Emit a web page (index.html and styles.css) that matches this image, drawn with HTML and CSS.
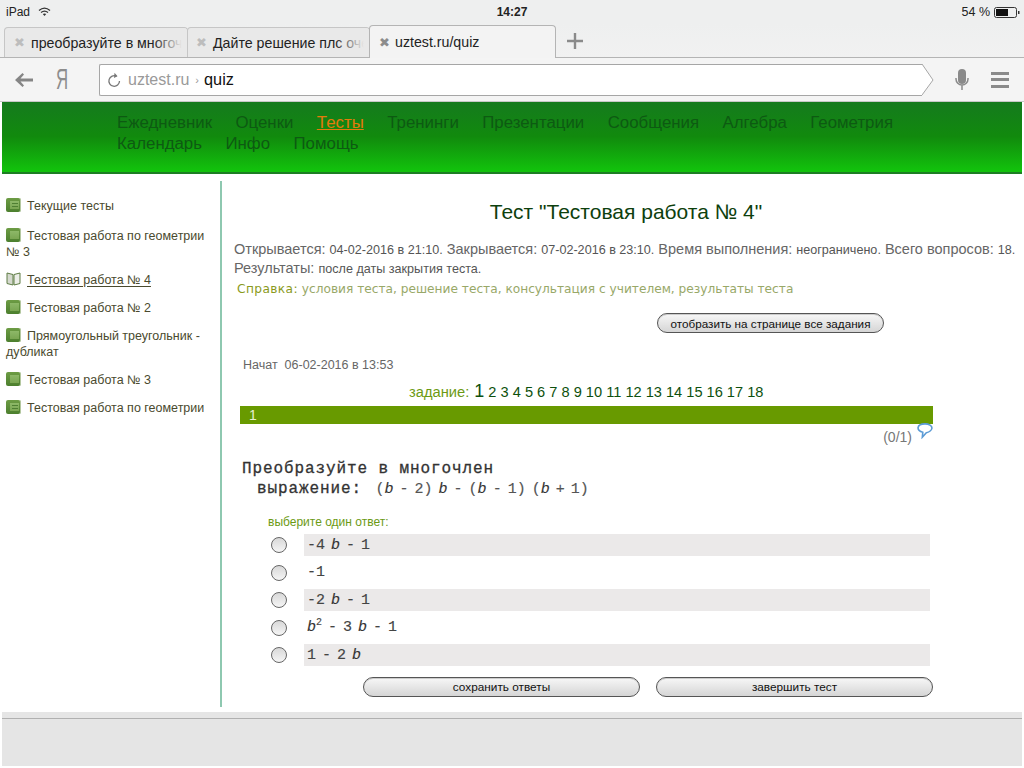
FILE: index.html
```html
<!DOCTYPE html>
<html lang="ru">
<head>
<meta charset="utf-8">
<title>uztest.ru/quiz</title>
<link rel="stylesheet" href="styles.css">
</head>
<body>
<div class="status">
  <div class="status-left">iPad
    <svg class="wifi" width="13" height="10" viewBox="0 0 13 10"><path d="M1 3.500C4.500 .5 8.500 .5 12 3.500" fill="none" stroke="#333" stroke-width="1.300"/><path d="M3 5.500C5 3.900 8 3.900 10 5.500" fill="none" stroke="#333" stroke-width="1.300"/><path d="M4.800 7L6.500 9 8.200 7C7.200 6.300 5.800 6.300 4.800 7Z" fill="#333"/></svg>
  </div>
  <div class="status-time">14:27</div>
  <div class="status-right">54 %
    <svg width="26" height="11" viewBox="0 0 26 11"><rect x=".5" y=".5" width="22" height="10" rx="2" fill="none" stroke="#333"/><rect x="2" y="2" width="12" height="7" fill="#111"/><rect x="24" y="4" width="1.500" height="3" fill="#333"/></svg>
  </div>
</div>
<div class="tabs">
  <div class="tab"><span class="x">✖</span><span class="tab-text">преобразуйте в многоч</span></div>
  <div class="tab tab-2"><span class="x">✖</span><span class="tab-text">Дайте решение плс оче</span></div>
  <div class="tab tab-active"><span class="x">✖</span><span class="tab-text">uztest.ru/quiz</span></div>
  <svg class="plus" width="16" height="16" viewBox="0 0 16 16"><path d="M8 0V16M0 8H16" stroke="#8a8a8a" stroke-width="2.400"/></svg>
</div>
<div class="toolbar">
  <svg class="back" width="18" height="14" viewBox="0 0 18 14"><path d="M7.500 0L9 1.500 5.500 5.500H18V8.500H5.500L9 12.500 7.500 14 0 7Z" fill="#858585"/></svg>
  <span class="ya">Я</span>
  <div class="address">
    <svg class="reload" width="14" height="16" viewBox="0 0 14 16"><path d="M9.500 4.200A5.300 5.300 0 1 0 12.500 9" fill="none" stroke="#777" stroke-width="1.300"/><path d="M7.500 .8L10.500 4.200 7 6Z" fill="#777"/></svg>
    <span class="host">uztest.ru</span><span class="sep">›</span><span class="path">quiz</span>
    <svg class="addr-tip" width="12" height="32" viewBox="0 0 12 32"><path d="M0 0L11 16 0 31" fill="#fff" stroke="#a6a6a6"/></svg>
  </div>
  <svg class="mic" width="14" height="22" viewBox="0 0 14 22"><rect x="3" y="0" width="8" height="15" rx="4" fill="#8a8a8a"/><path d="M1 9V10A6 6 0 0 0 13 10V9M7 16V21" fill="none" stroke="#8a8a8a" stroke-width="1.500"/></svg>
  <div class="menu"><i></i><i></i><i></i></div>
</div>
<div class="page">
  <nav class="nav">
    <a>Ежедневник</a><a>Оценки</a><a class="on">Тесты</a><a>Тренинги</a><a>Презентации</a><a>Сообщения</a><a>Алгебра</a><a>Геометрия</a><a>Календарь</a><a>Инфо</a><a>Помощь</a>
  </nav>
  <div class="main">
    <aside class="side">
      <div class="item item-first"><span class="book book-lined"></span>Текущие тесты</div>
      <div class="item"><span class="book"></span>Тестовая работа по геометрии № 3</div>
      <div class="item"><svg class="open" width="15" height="14" viewBox="0 0 15 14"><path d="M1 1L7 2.500 7 13 1 11.500Z" fill="#d5d9cf" stroke="#5f7d45"/><path d="M14 1L8 2.500 8 13 14 11.500Z" fill="#eceee8" stroke="#5f7d45"/></svg><u>Тестовая работа № 4</u></div>
      <div class="item"><span class="book"></span>Тестовая работа № 2</div>
      <div class="item"><span class="book"></span>Прямоугольный треугольник - дубликат</div>
      <div class="item"><span class="book"></span>Тестовая работа № 3</div>
      <div class="item"><span class="book book-lined"></span>Тестовая работа по геометрии</div>
    </aside>
    <section class="content">
      <h1 class="title">Тест "Тестовая работа № 4"</h1>
      <p class="info">Открывается: <small>04-02-2016 в 21:10.</small> Закрывается: <small>07-02-2016 в 23:10.</small> Время выполнения: <small>неограничено.</small> Всего вопросов: <small>18.</small><br>Результаты: <small>после даты закрытия теста.</small></p>
      <p class="help"><b>Справка:</b> условия теста, решение теста, консультация с учителем, результаты теста</p>
      <div class="show-row"><button class="btn show">отобразить на странице все задания</button></div>
      <p class="started">Начат&nbsp; 06-02-2016 в 13:53</p>
      <div class="pager"><span class="pager-label">задание:</span> <b>1</b> <a>2</a> <a>3</a> <a>4</a> <a>5</a> <a>6</a> <a>7</a> <a>8</a> <a>9</a> <a>10</a> <a>11</a> <a>12</a> <a>13</a> <a>14</a> <a>15</a> <a>16</a> <a>17</a> <a>18</a></div>
      <div class="bar">1</div>
      <div class="score">(0/1)
        <svg class="bubble" width="16" height="17" viewBox="0 0 18 18"><path d="M9 1.500C13.500 1.500 17 3.500 16.800 6.500 16.500 9 13 11 10.500 11.500L6 16.500 6.500 11C3 10 1 8 1.200 5.800 1.500 3 5 1.500 9 1.500Z" fill="#fff" stroke="#5b9bd5" stroke-width="1.800"/></svg>
      </div>
      <div class="question">Преобразуйте в многочлен<br><span class="q2">выражение: <span class="expr">(<i>b</i> - 2) <i>b</i> - (<i>b</i> - 1) (<i>b</i> + 1)</span></span></div>
      <div class="choose">выберите один ответ:</div>
      <div class="answers">
        <div class="answer"><span class="radio"></span><div class="opt shade">-4 <i>b</i> - 1</div></div>
        <div class="answer"><span class="radio"></span><div class="opt">-1</div></div>
        <div class="answer"><span class="radio"></span><div class="opt shade">-2 <i>b</i> - 1</div></div>
        <div class="answer"><span class="radio"></span><div class="opt"><i>b</i><sup>2</sup> - 3 <i>b</i> - 1</div></div>
        <div class="answer"><span class="radio"></span><div class="opt shade">1 - 2 <i>b</i></div></div>
      </div>
      <div class="actions"><button class="btn wide">сохранить ответы</button><button class="btn wide">завершить тест</button></div>
    </section>
  </div>
  <div class="foot"></div>
</div>
</body>
</html>
```
FILE: styles.css
```css
* { box-sizing: border-box; }
html, body { margin: 0; padding: 0; }
body { width: 1024px; height: 768px; overflow: hidden; background: #fff; font-family: "Liberation Sans", Arial, sans-serif; color: #333; }

.status { height: 24px; background: #eeefef; display: grid; grid-template-columns: 1fr auto 1fr; align-items: center; padding: 0 4px 0 6px; font-size: 12px; color: #222; }
.status-left { display: flex; align-items: center; gap: 8px; }
.status-time { font-size: 12px; font-weight: bold; margin-left: -2px; }
.status-right { display: flex; justify-content: flex-end; align-items: center; gap: 4px; font-size: 12.500px; }

.tabs { height: 34px; display: flex; align-items: flex-end; background: linear-gradient(#eeefef, #f1f1f1); border-bottom: 1px solid #b4b4b4; padding-left: 4px; position: relative; }
.tab { width: 184px; height: 30px; background: #e9e9e9; border: 1px solid #c6c6c6; border-bottom: 0; border-radius: 4px 4px 0 0; display: flex; align-items: center; padding-left: 9px; font-size: 14.200px; color: #222; overflow: hidden; white-space: nowrap; position: relative; }
.tab-2 { width: 183px; margin-left: -1px; padding-left: 8px; }
.tab-active { width: 187px; height: 33px; background: #f3f3f3; border-color: #b4b4b4; margin: 0 0 -1px -1px; padding-left: 9px; z-index: 1; }
.x { font-size: 12.500px; color: #bdbdbd; width: 17px; flex: none; }
.tab-active .x { color: #8c8c8c; width: 16px; }
.tab:not(.tab-active)::after { content: ""; position: absolute; right: 0; top: 0; bottom: 0; width: 34px; background: linear-gradient(to right, rgba(233,233,233,0), #e9e9e9 85%); }
.plus { margin: 0 0 8px 11px; }

.toolbar { height: 44px; background: #f4f4f4; border-bottom: 1px solid #c8c8c8; display: flex; align-items: center; padding-left: 15px; }
.back { flex: none; }
.ya { display: block; width: 11px; margin-left: 23px; font-size: 29px; color: #8d8d8d; line-height: 1; flex: none; transform: scaleX(.58); transform-origin: left center; }
.address { position: relative; width: 823px; height: 32px; margin-left: 32px; background: #fff; border: 1px solid #a6a6a6; border-right: 0; border-radius: 2px 0 0 2px; display: flex; align-items: center; padding-left: 7px; font-size: 16px; color: #9a9a9a; }
.reload { margin-right: 7px; flex: none; }
.sep { font-size: 11px; margin: 0 5px 0 6px; }
.path { color: #111; font-size: 16.300px; }
.addr-tip { position: absolute; left: 100%; top: -1px; }
.mic { margin-left: 33px; flex: none; }
.menu { margin-left: 22px; width: 18px; display: flex; flex-direction: column; gap: 3.500px; flex: none; }
.menu i { display: block; height: 3px; background: #8a8a8a; }

.page { padding: 0 2px; }
.nav { height: 72px; background: linear-gradient(#157a1e 0, #118a0d 48%, #12c40c 97%, #1e7e24 97%); padding: 10px 100px 0 115px; display: flex; flex-wrap: wrap; align-content: flex-start; font-size: 16.850px; line-height: 21px; column-gap: 23.400px; color: #0b5a12; }
.nav a { color: #0d5a12; }
.nav .on { color: #e47a0c; text-decoration: underline; }

.main { display: flex; margin-top: 7px; height: 526px; }
.side { margin-left: -2px; border-right: 2px solid #8ec8b0; padding: 17px 6px 0 6px; font-size: 12.500px; line-height: 16px; color: #4a4a2e; flex: none; width: 222px; }
.item { margin-bottom: 12px; }
.item-first { margin-bottom: 14px; }
.book { display: inline-block; width: 15px; height: 14px; margin-right: 6px; vertical-align: -2px; border-radius: 2px; background: linear-gradient(#8db868, #7aa652) 4px 3px / 9px 8px no-repeat, linear-gradient(#6d9c44, #4c7f2e); box-shadow: inset -1px 0 #b5c8a0; }
.book-lined { background: linear-gradient(#4f7f33, #4f7f33) 6px 5px / 6px 1px no-repeat, linear-gradient(#4f7f33, #4f7f33) 6px 8px / 6px 1px no-repeat, linear-gradient(#8db868, #7aa652) 4px 3px / 9px 8px no-repeat, linear-gradient(#6d9c44, #4c7f2e); }
.open { margin-right: 6px; vertical-align: -2px; }
.item u { text-underline-offset: 2px; }

.content { width: 800px; padding: 0 0 0 12px; position: relative; }
.title { margin: 18px 0 0; text-align: center; font-size: 21px; line-height: 25px; font-weight: normal; color: #0d400d; padding-right: 4px; height: 25px; }
.info { margin: 16px 0 0; font-size: 14.500px; line-height: 18px; color: #666; white-space: nowrap; }
.info small { font-size: 12.600px; color: #555; }
.help { margin: 2px 0 0 3px; font-family: "DejaVu Sans", sans-serif; font-size: 12.180px; line-height: 18px; color: #98a868; white-space: nowrap; }
.help b { font-weight: normal; color: #8a9a1c; letter-spacing: .4px; }
.show-row { padding-left: 423px; margin-top: 15px; height: 20px; display: flex; }
.btn { height: 20px; padding: 0; border: 1px solid #555; border-radius: 10px; background: linear-gradient(#f7f7f7, #d5d5d5); box-shadow: inset 0 1px #ccc; font-family: "Liberation Sans", Arial, sans-serif; font-size: 11.800px; color: #111; }
.show { width: 227px; font-size: 11.700px; }
.started { margin: 24px 0 0 9px; font-size: 12.500px; line-height: 16px; color: #666; }
.pager { margin-top: 8px; padding-left: 175px; font-size: 14.600px; line-height: 20px; color: #0d500d; height: 20px; white-space: nowrap; }
.pager-label { color: #6c9a14; font-size: 14.700px; margin-right: 1px; }
.pager b { font-weight: normal; font-size: 18px; }
.bar { margin: 5px 0 0 6px; width: 693px; height: 18px; background: #689a00; color: #e8f0d0; font-size: 14px; line-height: 18px; padding-left: 9px; }
.score { width: 699px; height: 22px; font-size: 14px; color: #777; display: flex; justify-content: flex-end; align-items: flex-start; padding-top: 4px; line-height: 18px; position: relative; }
.bubble { margin: -6px 0 0 5px; }
.question { margin: 13px 0 0 8px; font-family: "Liberation Mono", monospace; font-size: 16px; letter-spacing: .9px; line-height: 20px; color: #333; height: 40px; white-space: nowrap; -webkit-text-stroke: .3px #333; }
.q2 { padding-left: 15px; }
.expr { margin-left: 3px; font-size: 15px; letter-spacing: 0; word-spacing: -3px; color: #555; -webkit-text-stroke: .15px #555; }
.question i, .opt i { font-style: italic; color: #333; }
.choose { margin: 16px 0 0 34px; font-size: 12px; line-height: 14px; color: #6c9a14; height: 14px; }
.answers { margin-top: 2px; }
.answer { display: flex; align-items: center; height: 27.500px; }
.radio { width: 16px; height: 16px; margin: 1px 0 0 37px; border-radius: 50%; border: 1px solid #666; background: linear-gradient(#d8d8d8, #f5f5f5); flex: none; }
.opt { margin-left: 17px; width: 626px; height: 22px; padding-left: 3px; font-family: "Liberation Mono", monospace; font-size: 15px; word-spacing: -3px; line-height: 23px; color: #444; -webkit-text-stroke: .15px #444; }
.opt sup { font-size: 10px; line-height: 0; }
.shade { background: #ebe9e9; }
.actions { display: flex; margin: 8px 0 0 129px; gap: 16px; }
.wide { width: 277px; }

.foot { margin-top: 5px; height: 54px; background: #e5e5e5; position: relative; }
.foot::before { content: ""; display: block; height: 1px; background: #b0b0b0; position: relative; top: 6px; }
```
